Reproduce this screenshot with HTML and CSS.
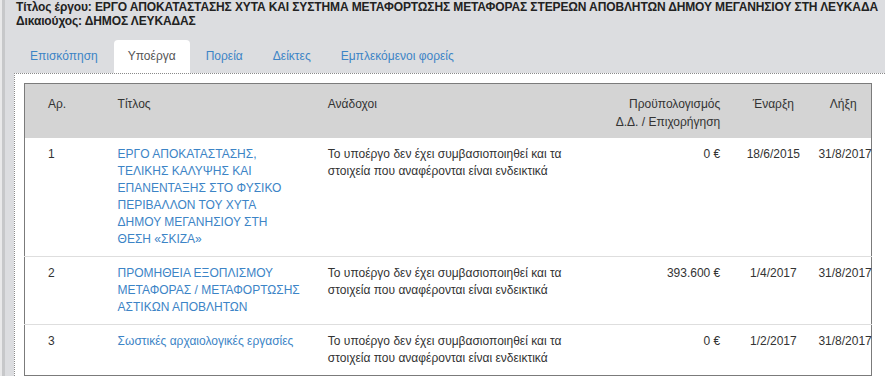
FILE: index.html
```html
<!DOCTYPE html>
<html lang="el">
<head>
<meta charset="utf-8">
<title>Υποέργα</title>
<link rel="stylesheet" href="styles.css">
</head>
<body>
<div class="frame">
  <div class="page">
    <div class="info">
      <div>Τίτλος έργου: ΕΡΓΟ ΑΠΟΚΑΤΑΣΤΑΣΗΣ ΧΥΤΑ ΚΑΙ ΣΥΣΤΗΜΑ ΜΕΤΑΦΟΡΤΩΣΗΣ ΜΕΤΑΦΟΡΑΣ ΣΤΕΡΕΩΝ ΑΠΟΒΛΗΤΩΝ ΔΗΜΟΥ ΜΕΓΑΝΗΣΙΟΥ ΣΤΗ ΛΕΥΚΑΔΑ</div>
      <div>Δικαιούχος: ΔΗΜΟΣ ΛΕΥΚΑΔΑΣ</div>
    </div>
    <ul class="tabs">
      <li><a href="#">Επισκόπηση</a></li>
      <li class="active"><a href="#">Υποέργα</a></li>
      <li><a href="#">Πορεία</a></li>
      <li><a href="#">Δείκτες</a></li>
      <li><a href="#">Εμπλεκόμενοι φορείς</a></li>
    </ul>
    <div class="panel">
      <table class="grid">
        <colgroup>
          <col class="c-no"><col class="c-title"><col class="c-contr"><col class="c-budget"><col class="c-start"><col class="c-end">
        </colgroup>
        <thead>
          <tr>
            <th class="no">Αρ.</th>
            <th>Τίτλος</th>
            <th>Ανάδοχοι</th>
            <th class="num">Προϋπολογισμός<br>Δ.Δ. / Επιχορήγηση</th>
            <th class="ctr">Έναρξη</th>
            <th class="ctr last">Λήξη</th>
          </tr>
        </thead>
        <tbody>
          <tr>
            <td class="no">1</td>
            <td><a href="#">ΕΡΓΟ ΑΠΟΚΑΤΑΣΤΑΣΗΣ, ΤΕΛΙΚΗΣ ΚΑΛΥΨΗΣ ΚΑΙ ΕΠΑΝΕΝΤΑΞΗΣ ΣΤΟ ΦΥΣΙΚΟ ΠΕΡΙΒΑΛΛΟΝ ΤΟΥ ΧΥΤΑ<br>ΔΗΜΟΥ ΜΕΓΑΝΗΣΙΟΥ ΣΤΗ<br>ΘΕΣΗ «ΣΚΙΖΑ»</a></td>
            <td>Το υποέργο δεν έχει συμβασιοποιηθεί και τα στοιχεία που αναφέρονται είναι ενδεικτικά</td>
            <td class="num">0 €</td>
            <td class="ctr">18/6/2015</td>
            <td class="ctr last">31/8/2017</td>
          </tr>
          <tr>
            <td class="no">2</td>
            <td><a href="#">ΠΡΟΜΗΘΕΙΑ ΕΞΟΠΛΙΣΜΟΥ ΜΕΤΑΦΟΡΑΣ / ΜΕΤΑΦΟΡΤΩΣΗΣ ΑΣΤΙΚΩΝ ΑΠΟΒΛΗΤΩΝ</a></td>
            <td>Το υποέργο δεν έχει συμβασιοποιηθεί και τα στοιχεία που αναφέρονται είναι ενδεικτικά</td>
            <td class="num">393.600 €</td>
            <td class="ctr">1/4/2017</td>
            <td class="ctr last">31/8/2017</td>
          </tr>
          <tr>
            <td class="no">3</td>
            <td><a href="#">Σωστικές αρχαιολογικές εργασίες</a></td>
            <td>Το υποέργο δεν έχει συμβασιοποιηθεί και τα στοιχεία που αναφέρονται είναι ενδεικτικά</td>
            <td class="num">0 €</td>
            <td class="ctr">1/2/2017</td>
            <td class="ctr last">31/8/2017</td>
          </tr>
        </tbody>
      </table>
    </div>
  </div>
</div>
</body>
</html>
```
FILE: styles.css
```css
html, body {
  margin: 0;
  padding: 0;
  background: #dcdde0;
  overflow: hidden;
}
body {
  font-family: "Liberation Sans", Arial, sans-serif;
  font-size: 12px;
  color: #333;
}
.frame {
  border-left: 2px solid #e9e9ea;
  min-height: 100vh;
}
.page {
  border-left: 3px solid #c7c8ca;
  padding-left: 9px;
  min-height: 100vh;
}
.info {
  padding-left: 2px;
  font-weight: bold;
  line-height: 14px;
  color: #222;
  white-space: nowrap;
  letter-spacing: -0.12px;
}
.tabs {
  list-style: none;
  margin: 12px 0 0;
  padding: 0 0 0 2px;
  display: flex;
  height: 33px;
}
.tabs li {
  margin-right: 2px;
}
.tabs a {
  display: block;
  padding: 0 14px;
  line-height: 33px;
  color: #3c84c6;
  text-decoration: none;
}
.tabs .active a {
  background: #fff;
  color: #555;
  border-radius: 4px 4px 0 0;
}
.panel {
  background: #fff;
  border-top: 1px dotted #8a8a8a;
  border-left: 1px dotted #8a8a8a;
  padding: 9px 0 0 9px;
}
.grid {
  width: 848px;
  table-layout: fixed;
  border-collapse: collapse;
  border: 1px solid #7b7b7b;
}
.c-no { width: 83px; }
.c-title { width: 210px; }
.c-contr { width: 260px; }
.c-budget { width: 150px; }
.c-start { width: 90px; }
.c-end { width: 53px; }
.grid th {
  background: #d4d4d4;
  font-weight: normal;
  color: #333;
  text-align: left;
  vertical-align: top;
  line-height: 18px;
  padding: 11px 10px 7px;
}
.grid td {
  vertical-align: top;
  line-height: 17px;
  padding: 8px 10px;
  border-top: 1px solid #dedede;
}
.grid tbody tr:first-child td {
  border-top: none;
}
.grid a {
  color: #3c84c6;
  text-decoration: none;
}
.grid .no {
  padding-left: 23px;
}
.grid .num {
  text-align: right;
  padding-right: 8px;
}
.grid .ctr {
  text-align: center;
  padding-left: 0;
  padding-right: 0;
}
.grid .last {
  padding-right: 3px;
}
```
